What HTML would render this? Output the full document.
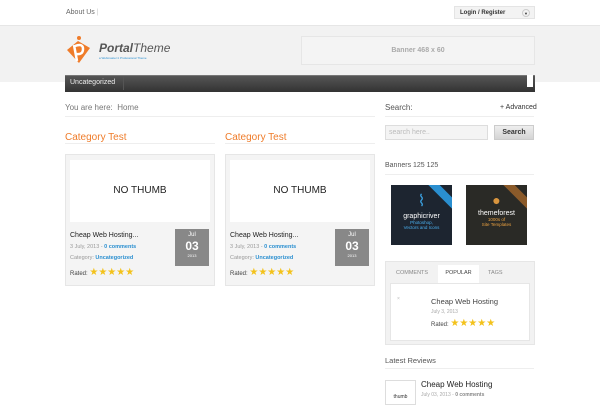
<!DOCTYPE html><html><head><meta charset="utf-8"><style>
*{margin:0;padding:0;box-sizing:border-box}
body{width:600px;height:400px;overflow:hidden;background:#fff;font-family:"Liberation Sans",sans-serif;position:relative;color:#444}
.a{position:absolute}
.star{color:#f3c21b;font-size:10px;letter-spacing:0px}
.blue{color:#2a8fd0;font-weight:bold}
</style></head><body>
<div class="a" style="left:66px;top:9px;font-size:7px;color:#666">About Us <span style="color:#ccc">|</span></div>
<div class="a" style="left:454px;top:6px;width:81px;height:13px;background:#f3f3f3;border:1px solid #e4e4e4;font-size:6px;font-weight:bold;color:#333;padding:3px 0 0 5px">Login / Register<span style="position:absolute;right:4px;top:2px;width:8px;height:8px;border:1px solid #ccc;border-radius:50%;font-size:4px;text-align:center;line-height:7px">▼</span></div>
<div class="a" style="left:0;top:25px;width:600px;height:57px;background:#f2f2f2;border-top:1px solid #e6e6e6"></div>
<svg class="a" style="left:65px;top:35px" width="26" height="30" viewBox="0 0 26 30"><polygon points="2,15 13,6 25,13 14,28" fill="#ef7c2a"/><path d="M9 10 L12 26 M10 11 Q18 8 18 14 Q18 20 11 19" stroke="#fff" stroke-width="2.5" fill="none"/><circle cx="14" cy="3" r="2" fill="#ef7c2a"/></svg>
<div class="a" style="left:99px;top:41px;font-size:12px;color:#555;font-style:italic"><b>Portal</b>Theme</div>
<div class="a" style="left:99px;top:56px;font-size:3px;color:#2a8fd0">a Webmaster it Professional Theme</div>
<div class="a" style="left:301px;top:36px;width:234px;height:29px;border:1px solid #e6e6e6;background:#f4f4f4;font-size:7px;color:#aaa;text-align:center;line-height:27px;font-weight:bold">Banner 468 x 60</div>
<div class="a" style="left:65px;top:75px;width:470px;height:17px;background:linear-gradient(#555,#333);border-top:1px solid #777"></div>
<div class="a" style="left:70px;top:79px;font-size:7px;color:#eee">Uncategorized</div>
<div class="a" style="left:123px;top:76px;width:1px;height:14px;background:#555"></div>
<div class="a" style="left:527px;top:75px;width:6px;height:12px;background:#fff"></div>
<div class="a" style="left:65px;top:103px;font-size:8px;color:#777">You are here:&nbsp; Home</div>
<div class="a" style="left:65px;top:116px;width:310px;height:1px;background:#eee"></div>
<div class="a" style="left:385px;top:103px;font-size:8px;color:#555">Search:</div>
<div class="a" style="left:500px;top:104px;font-size:7px;color:#333">+ Advanced</div>
<div class="a" style="left:385px;top:116px;width:149px;height:1px;background:#eee"></div>
<div class="a" style="left:385px;top:125px;width:103px;height:15px;background:#f4f4f4;border:1px solid #ddd;font-size:7px;color:#bbb;padding:3px 0 0 3px">search here..</div>
<div class="a" style="left:494px;top:125px;width:40px;height:15px;background:linear-gradient(#eee,#d4d4d4);border:1px solid #ccc;font-size:7px;font-weight:bold;color:#333;text-align:center;line-height:13px">Search</div>

<div class="a" style="left:65px;top:132px;font-size:10px;color:#ef7c2a">Category Test</div>
<div class="a" style="left:225px;top:132px;font-size:10px;color:#ef7c2a">Category Test</div>
<div class="a" style="left:65px;top:143px;width:150px;height:1px;background:#eee"></div>
<div class="a" style="left:225px;top:143px;width:150px;height:1px;background:#eee"></div>

<div class="a" style="left:65px;top:154px;width:150px;height:132px;background:#f4f4f4;border:1px solid #e6e6e6"></div>
<div class="a" style="left:70px;top:160px;width:140px;height:62px;background:#fff;font-size:10px;color:#222;text-align:center;line-height:62px">NO THUMB</div>
<div class="a" style="left:175px;top:229px;width:34px;height:37px;background:#888;color:#fff;text-align:center;font-size:6px;line-height:1"><div style="margin-top:3px">Jul</div><div style="font-size:12px;font-weight:bold;margin-top:2px">03</div><div style="font-size:4px;margin-top:2px">2013</div></div>
<div class="a" style="left:70px;top:232px;font-size:7px;color:#222">Cheap Web Hosting...</div>
<div class="a" style="left:70px;top:244px;font-size:5.5px;color:#999">3 July, 2013 - <span class="blue">0 comments</span></div>
<div class="a" style="left:70px;top:255px;font-size:5.5px;color:#999">Category: <span class="blue">Uncategorized</span></div>
<div class="a" style="left:70px;top:267px;font-size:6px;color:#444">Rated: <span class="star">★★★★★</span></div>

<div class="a" style="left:225px;top:154px;width:150px;height:132px;background:#f4f4f4;border:1px solid #e6e6e6"></div>
<div class="a" style="left:230px;top:160px;width:140px;height:62px;background:#fff;font-size:10px;color:#222;text-align:center;line-height:62px">NO THUMB</div>
<div class="a" style="left:335px;top:229px;width:34px;height:37px;background:#888;color:#fff;text-align:center;font-size:6px;line-height:1"><div style="margin-top:3px">Jul</div><div style="font-size:12px;font-weight:bold;margin-top:2px">03</div><div style="font-size:4px;margin-top:2px">2013</div></div>
<div class="a" style="left:230px;top:232px;font-size:7px;color:#222">Cheap Web Hosting...</div>
<div class="a" style="left:230px;top:244px;font-size:5.5px;color:#999">3 July, 2013 - <span class="blue">0 comments</span></div>
<div class="a" style="left:230px;top:255px;font-size:5.5px;color:#999">Category: <span class="blue">Uncategorized</span></div>
<div class="a" style="left:230px;top:267px;font-size:6px;color:#444">Rated: <span class="star">★★★★★</span></div>

<div class="a" style="left:385px;top:162px;font-size:7px;color:#555">Banners 125 125</div>
<div class="a" style="left:385px;top:174px;width:149px;height:1px;background:#eee"></div>
<div class="a" style="left:391px;top:185px;width:61px;height:60px;background:#1d2530;color:#fff;text-align:center;font-size:7px;overflow:hidden"><div style="position:absolute;right:-10px;top:4px;width:40px;height:8px;background:#2a8fd0;transform:rotate(45deg)"></div><div style="color:#3aa0e0;font-size:16px;margin-top:6px">⌇</div><div style="margin-top:2px">graphicriver</div><div style="color:#4ab0f0;font-size:4.5px">Photoshop,<br>Vectors and Icons</div></div>
<div class="a" style="left:466px;top:185px;width:61px;height:60px;background:#2a2a26;color:#fff;text-align:center;font-size:7px;overflow:hidden"><div style="position:absolute;right:-10px;top:4px;width:40px;height:8px;background:#8a5a2a;transform:rotate(45deg)"></div><div style="color:#d9953e;font-size:14px;margin-top:7px">●</div><div style="margin-top:2px">themeforest</div><div style="color:#e9a040;font-size:4.5px">1000s of<br>Site Templates</div></div>

<div class="a" style="left:385px;top:261px;width:150px;height:84px;background:#f2f2f2;border:1px solid #e6e6e6"></div>
<div class="a" style="left:396px;top:270px;font-size:5.5px;color:#888">COMMENTS</div>
<div class="a" style="left:438px;top:265px;width:41px;height:20px;background:#fff;font-size:5.5px;color:#444;text-align:center;line-height:17px">POPULAR</div>
<div class="a" style="left:488px;top:270px;font-size:5.5px;color:#888">TAGS</div>
<div class="a" style="left:390px;top:283px;width:140px;height:58px;background:#fff;border:1px solid #e6e6e6"></div>
<div class="a" style="left:397px;top:296px;font-size:5px;color:#bbb">×</div>
<div class="a" style="left:431px;top:297px;font-size:7.5px;color:#444">Cheap Web Hosting</div>
<div class="a" style="left:431px;top:309px;font-size:5px;color:#aaa">July 3, 2013</div>
<div class="a" style="left:431px;top:318px;font-size:6px;color:#444">Rated: <span class="star">★★★★★</span></div>

<div class="a" style="left:385px;top:356px;font-size:7.5px;color:#555">Latest Reviews</div>
<div class="a" style="left:385px;top:368px;width:149px;height:1px;background:#eee"></div>
<div class="a" style="left:385px;top:380px;width:31px;height:25px;border:1px solid #ddd;font-size:5px;color:#333;text-align:center;padding-top:13px">thumb</div>
<div class="a" style="left:421px;top:380px;font-size:8px;color:#222">Cheap Web Hosting</div>
<div class="a" style="left:421px;top:392px;font-size:5px;color:#aaa">July 03, 2013 - <b style="color:#888">0 comments</b></div>
</body></html>
